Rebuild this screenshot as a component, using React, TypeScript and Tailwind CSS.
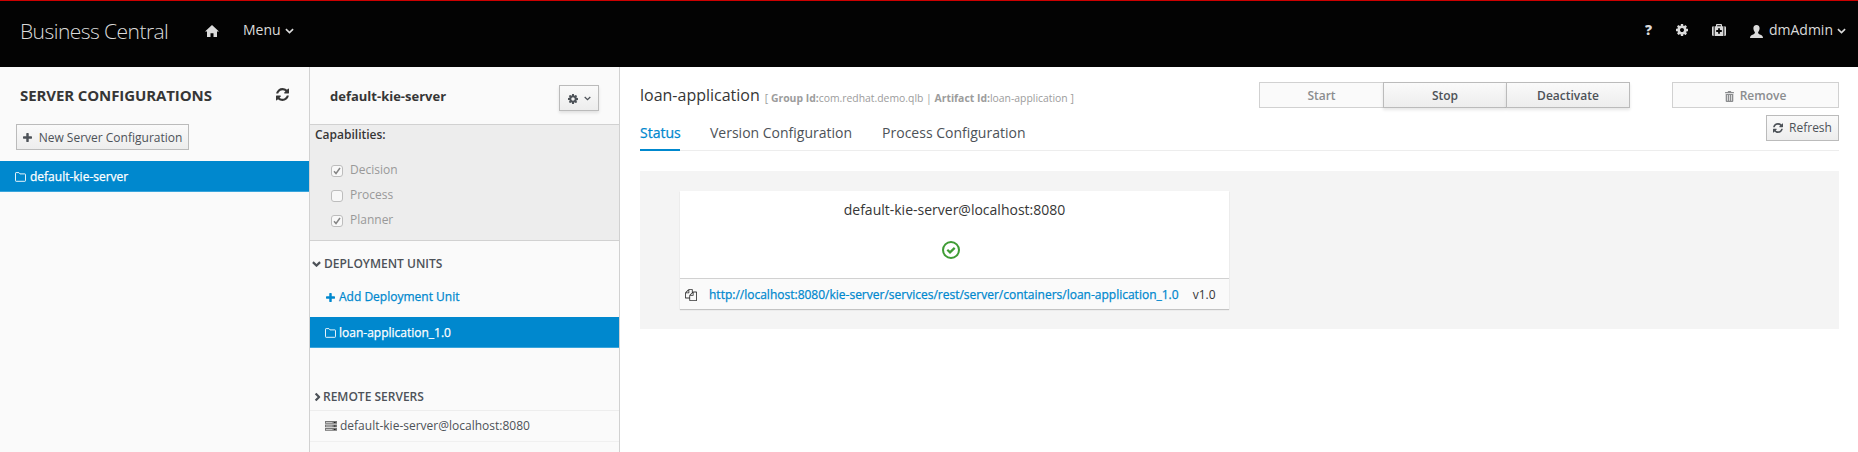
import React, { ReactNode } from "react";

type IconProps = { className?: string };

const Glyph = ({ d, box, className }: { d: string; box: string; className?: string }) => (
  <svg viewBox={box} className={`shrink-0 fill-current ${className ?? ""}`}>
    <path d={d} fillRule="evenodd" />
  </svg>
);

const Refresh = ({ className }: IconProps) => (
  <Glyph
    box="0 0 1536 1536"
    className={className}
    d="M1511 928q0 5-1 7-64 268-268 434.5t-478 166.5q-146 0-282.5-55t-243.5-157l-129 129q-19 19-45 19t-45-19-19-45v-448q0-26 19-45t45-19h448q26 0 45 19t19 45-19 45l-137 137q71 66 161 102t187 36q134 0 250-65t186-179q11-17 53-117 8-23 30-23h192q13 0 22.5 9.5t9.5 22.5zm25-800v448q0 26-19 45t-45 19h-448q-26 0-45-19t-19-45 19-45l138-138q-148-137-349-137-134 0-250 65t-186 179q-11 17-53 117-8 23-30 23h-199q-13 0-22.5-9.5t-9.5-22.5v-7q65-268 270-434.5t480-166.5q146 0 284 55.5t245 156.5l130-129q19-19 45-19t45 19 19 45z"
  />
);

const Cog = ({ className }: IconProps) => (
  <Glyph
    box="128 128 1536 1536"
    className={className}
    d="M1152 896q0-106-75-181t-181-75-181 75-75 181 75 181 181 75 181-75 75-181zm512-109v222q0 12-8 23t-20 13l-185 28q-19 54-39 91 35 50 107 138 10 12 10 25t-9 23q-27 37-99 108t-94 71q-12 0-26-9l-138-108q-44 23-91 38-16 136-29 186-7 28-36 28h-222q-14 0-24.5-8.5t-11.5-21.5l-28-184q-49-16-90-37l-141 107q-10 9-25 9-14 0-25-11-126-114-165-168-7-10-7-23 0-12 8-23 15-21 51-66.5t54-70.5q-27-50-41-99l-183-27q-13-2-21-12.5t-8-23.5v-222q0-12 8-23t19-13l186-28q14-46 39-92-40-57-107-138-10-12-10-24 0-10 9-23 26-36 98.5-107.5t94.5-71.5q13 0 26 10l138 107q44-23 91-38 16-136 29-186 7-28 36-28h222q14 0 24.5 8.5t11.5 21.5l28 184q49 16 90 37l142-107q9-9 24-9 13 0 25 10 129 119 165 170 7 8 7 22 0 12-8 23-15 21-51 66.5t-54 70.5q26 50 41 98l183 28q13 2 21 12.5t8 23.5z"
  />
);

const Plus = ({ className }: IconProps) => (
  <Glyph
    box="192 128 1408 1408"
    className={className}
    d="M1600 736v192q0 40-28 68t-68 28h-416v416q0 40-28 68t-68 28h-192q-40 0-68-28t-28-68v-416h-416q-40 0-68-28t-28-68v-192q0-40 28-68t68-28h416v-416q0-40 28-68t68-28h192q40 0 68 28t28 68v416h416q40 0 68 28t28 68z"
  />
);

const Copy = ({ className }: IconProps) => (
  <Glyph
    box="0 0 1792 1792"
    className={className}
    d="M1696 384q40 0 68 28t28 68v1216q0 40-28 68t-68 28h-960q-40 0-68-28t-28-68v-288h-544q-40 0-68-28t-28-68v-672q0-40 20-88t48-76l408-408q28-28 76-48t88-20h416q40 0 68 28t28 68v328q68-40 128-40h416zm-544 213l-299 299h299v-299zm-640-384l-299 299h299v-299zm196 647l316-316v-416h-384v416q0 40-28 68t-68 28h-416v640h512v-256q0-40 20-88t48-76zm956 804v-1152h-384v416q0 40-28 68t-68 28h-416v640h896z"
  />
);

const Chevron = ({ className, w = 1.6 }: IconProps & { w?: number }) => (
  <svg viewBox="0 0 9 6" className={`shrink-0 fill-none stroke-current ${className ?? ""}`}>
    <path d="M0.9 1.1 4.5 4.6 8.1 1.1" strokeWidth={w} />
  </svg>
);

const Folder = ({ className }: IconProps) => (
  <svg viewBox="0 0 11 10" className={`shrink-0 fill-none stroke-current ${className ?? ""}`}>
    <path d="M.5 1.2Q.5.6 1.1.6H3.9L5 1.9H9.9Q10.5 1.9 10.5 2.5V8.7Q10.5 9.3 9.9 9.3H1.1Q.5 9.3.5 8.7Z" strokeWidth="0.9" />
  </svg>
);

const Home = ({ className }: IconProps) => (
  <Glyph box="0 0 14 12" className={className} d="M7 0 14 6.6H12V12H8.5V8.2H5.5V12H2V6.6H0Z" />
);

const Medkit = ({ className }: IconProps) => (
  <Glyph
    box="0 0 14 12"
    className={className}
    d="M1.7 2.2V12H1.4Q0 12 0 10.7V3.5Q0 2.2 1.4 2.2ZM12.3 2.2V12H12.6Q14 12 14 10.7V3.5Q14 2.2 12.6 2.2ZM2.6 2.2H4V.9Q4 0 4.9 0H9.1Q10 0 10 .9V2.2H11.4V12H2.6ZM5.2 1.2V2.2H8.8V1.2ZM6.1 4.2V6.1H4.2V7.9H6.1V9.8H7.9V7.9H9.8V6.1H7.9V4.2Z"
  />
);

const User = ({ className }: IconProps) => (
  <Glyph
    box="0 0 13 13"
    className={className}
    d="M6.5 0C8.6 0 9.7 1.5 9.6 3.5 9.5 5.1 8.9 6.3 8.1 7.1 8 8.4 8.5 8.9 9.8 9.4 11.8 10.1 13 10.8 13 13H0C0 10.8 1.2 10.1 3.2 9.4 4.5 8.9 5 8.4 4.9 7.1 4.1 6.3 3.5 5.1 3.4 3.5 3.3 1.5 4.4 0 6.5 0Z"
  />
);

const Trash = ({ className }: IconProps) => (
  <Glyph
    box="0 0 9 11"
    className={className}
    d="M2.8 1V.6Q2.8 0 3.4 0H5.6Q6.2 0 6.2.6V1H8.5Q9 1 9 1.5V2.3H0V1.5Q0 1 .5 1ZM.7 3H8.3V10Q8.3 11 7.3 11H1.7Q.7 11 .7 10ZM2.2 4V9.8H2.9V4ZM4.15 4V9.8H4.85V4ZM6.1 4V9.8H6.8V4Z"
  />
);

const Server = ({ className }: IconProps) => (
  <svg viewBox="0 0 12 10" className={`shrink-0 ${className ?? ""}`}>
    {[0, 3.5, 7].map((y) => (
      <g key={y}>
        <rect y={y} width="12" height="2.8" className="fill-[#777]" />
        <rect x="1" y={y + 1} width="6.5" height="1" className="fill-[#c5c5c5]" />
        <rect x="9" y={y + 1} width="1.5" height="1" className="fill-[#222]" />
      </g>
    ))}
  </svg>
);

const Check = ({ label, checked }: { label: string; checked?: boolean }) => (
  <div className="flex h-[25px] items-center text-[#999]">
    <span className="mt-[2px] flex size-3 items-center justify-center rounded-[3px] border border-[#bdbdbd] bg-[#f8f8f8]">
      {checked && (
        <svg viewBox="0 0 8 8" className="size-2 fill-none stroke-[#858585]">
          <path d="M1 4.3 3 6.5 7 1" strokeWidth="1.5" />
        </svg>
      )}
    </span>
    <span className="ml-[7px] text-[12px]">{label}</span>
  </div>
);

const Button = ({ children, className }: { children: ReactNode; className: string }) => (
  <button className={`flex h-[26px] items-center justify-center border text-[12px] ${className}`}>{children}</button>
);

const active = "border-[#bbb] bg-linear-to-b from-[#fafafa] to-[#ededed] text-[#4d5258]";

export default function App() {
  return (
    <div className="flex h-[452px] w-[1858px] flex-col overflow-hidden bg-white font-['Open_Sans',sans-serif] text-[12px] leading-5 whitespace-nowrap text-[#363636]">
      <header className="flex h-[67px] shrink-0 border-t border-[#c00] bg-[#030303] text-[#dbdbdb]">
        <div className="ml-[20px] h-[61px] w-[185px] text-[21px] leading-[60px] font-light tracking-[-0.55px]">Business Central</div>
        <Home className="mt-[24px] h-[12px] w-[14px]" />
        <div className="ml-[24px] flex h-[58px] items-center text-[14px]">Menu</div>
        <Chevron className="mt-[27px] ml-[4px] h-[6px] w-[9px]" />
        <div className="flex-1" />
        <div className="flex h-[58px] w-[31px] items-center text-[14px] font-extrabold">?</div>
        <Cog className="mt-[23px] size-3" />
        <Medkit className="mt-[23px] ml-[24px] h-[12px] w-[14px]" />
        <User className="mt-[24px] ml-[24px] size-[13px]" />
        <div className="ml-[6px] flex h-[58px] items-center text-[14px]">dmAdmin</div>
        <Chevron className="mt-[27px] mr-[12px] ml-[4px] h-[6px] w-[9px]" />
      </header>

      <div className="flex min-h-0 flex-1">
        <aside className="w-[310px] shrink-0 border-r border-[#d1d1d1] bg-[#fafafa]">
          <div className="flex h-[57px] items-center justify-between pr-5 pb-[2px] pl-5">
            <h2 className="text-[15px] font-bold tracking-[-0.1px]">SERVER CONFIGURATIONS</h2>
            <Refresh className="size-[13px]" />
          </div>
          <Button className={`ml-4 w-[173px] pt-px ${active}`}>
            <Plus className="mr-[7px] size-[9px]" />
            New Server Configuration
          </Button>
          <div className="mt-[11px] flex h-[31px] items-center border-b border-[#39a5dc] bg-[#0088ce] pt-px pl-[15px] text-white">
            <Folder className="mr-1 h-[10px] w-[11px]" />
            <span className="[-webkit-text-stroke:0.25px_currentColor]">default-kie-server</span>
          </div>
        </aside>

        <aside className="w-[310px] shrink-0 border-r border-[#d1d1d1] bg-[#fafafa]">
          <div className="flex h-[58px] justify-between border-b border-[#d1d1d1] pr-5 pl-5">
            <h2 className="pt-[19px] text-[13px] font-bold">default-kie-server</h2>
            <Button className={`mt-[18px] w-10 gap-[6px] pt-px shadow-[0_2px_3px_rgba(3,3,3,0.1)] ${active}`}>
              <Cog className="size-[10px]" />
              <Chevron className="h-[5px] w-[7px]" />
            </Button>
          </div>
          <div className="h-[116px] border-b border-[#d1d1d1] bg-[#ededed] pl-[5px]">
            <div className="font-semibold">Capabilities:</div>
            <div className="mt-[12px] pl-[16px]">
              <Check label="Decision" checked />
              <Check label="Process" />
              <Check label="Planner" checked />
            </div>
          </div>
          <div className="flex h-[46px] items-center pl-[2px] font-semibold text-[#4d5258]">
            <Chevron w={2.2} className="mr-[3px] h-[6px] w-[9px]" />
            DEPLOYMENT UNITS
          </div>
          <div className="flex h-[30px] pl-[16px] text-[#0088ce]">
            <Plus className="mt-[6px] mr-1 size-[9px]" />
            <span className="[-webkit-text-stroke:0.25px_currentColor]">Add Deployment Unit</span>
          </div>
          <div className="flex h-[31px] items-center border-b border-[#39a5dc] bg-[#0088ce] pt-px pl-[15px] text-white">
            <Folder className="mr-[3px] h-[10px] w-[11px]" />
            <span className="[-webkit-text-stroke:0.25px_currentColor]">loan-application_1.0</span>
          </div>
          <div className="flex h-[63px] items-end border-b border-[#ededed] pb-[3px] pl-[3px] font-semibold text-[#4d5258]">
            <Chevron w={2.2} className="mr-px mb-[7px] h-[6px] w-[9px] -rotate-90" />
            REMOTE SERVERS
          </div>
          <div className="flex h-[31px] items-center border-b border-[#f0f0f0] pl-[15px] text-[#4d5258]">
            <Server className="mr-[3px] h-[10px] w-[12px]" />
            default-kie-server@localhost:8080
          </div>
        </aside>

        <main className="flex-1 pr-[19px] pl-5">
          <div className="flex h-[48px]">
            <h1 className="pt-[18px] text-[16px]">loan-application</h1>
            <div className="ml-[5px] pt-[21px] text-[10.4px] text-[#9c9c9c]">
              [ <b>Group Id:</b>com.redhat.demo.qlb | <b>Artifact Id:</b>loan-application ]
            </div>
            <div className="flex-1" />
            <div className="mt-[15px] flex h-[26px]">
              <Button className="w-[124px] border-r-0 border-[#d1d1d1] bg-[#fafafa] pt-[2px] font-semibold text-[#8b8d8f]">Start</Button>
              <Button className={`w-[123px] border-r-0 pt-[2px] font-semibold shadow-[0_2px_3px_rgba(3,3,3,0.1)] ${active}`}>Stop</Button>
              <Button className={`w-[124px] pt-[2px] font-semibold shadow-[0_2px_3px_rgba(3,3,3,0.1)] ${active}`}>Deactivate</Button>
            </div>
            <Button className="mt-[15px] ml-[42px] w-[167px] border-[#d1d1d1] bg-[#fafafa] pt-[2px] font-semibold text-[#8b8d8f]">
              <Trash className="mr-[6px] h-[11px] w-[9px]" />
              Remove
            </Button>
          </div>
          <nav className="flex h-[36px] border-b border-[#ededed] text-[14px] text-[#4d5258]">
            <div className="mr-[30px] h-[36px] w-[40px] border-b-2 border-[#0088ce] pt-2 text-[#0088ce] [-webkit-text-stroke:0.25px_currentColor]">Status</div>
            <div className="mr-[30px] pt-2">Version Configuration</div>
            <div className="pt-2">Process Configuration</div>
            <div className="flex-1" />
            <Button className={`w-[73px] ${active}`}>
              <Refresh className="mr-[6px] size-[10px]" />
              Refresh
            </Button>
          </nav>
          <section className="mt-5 h-[158px] bg-[#f4f4f4] pt-5 pl-10">
            <div className="h-[118px] w-[549px] bg-white shadow-[0_1px_1px_rgba(3,3,3,0.2)]">
              <div className="flex h-[88px] flex-col items-center border-b border-[#d1d1d1] pt-[9px]">
                <div className="text-[14px]">default-kie-server@localhost:8080</div>
                <svg viewBox="0 0 18 18" className="mt-[21px] mr-[8px] size-[18px] fill-none stroke-[#3f9c35]">
                  <circle cx="9" cy="9" r="8" strokeWidth="2" />
                  <path d="M5.3 8.8 8 11.4 12.7 6.9" strokeWidth="2.2" />
                </svg>
              </div>
              <div className="flex h-[30px] items-center bg-[#fafafa] pt-[2px] pl-[5px]">
                <Copy className="mr-[12px] size-3" />
                <a className="text-[#0088ce] [-webkit-text-stroke:0.25px_currentColor]">http://localhost:8080/kie-server/services/rest/server/containers/loan-application_1.0</a>
                <span className="ml-[14px]">v1.0</span>
              </div>
            </div>
          </section>
        </main>
      </div>
    </div>
  );
}
